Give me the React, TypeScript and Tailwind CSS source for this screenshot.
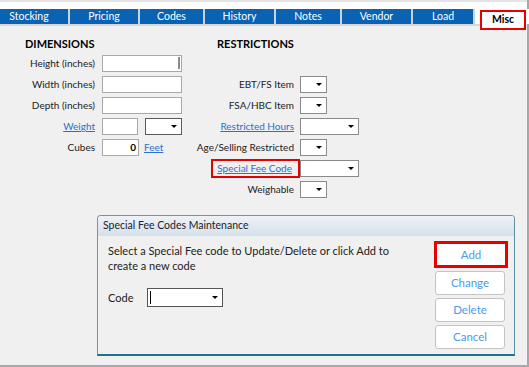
import React from "react";

const tabs = [
  { label: "Stocking", w: "w-[70px] pr-[10px]" },
  { label: "Pricing", w: "w-[70px]" },
  { label: "Codes", w: "w-[65px]" },
  { label: "History", w: "w-[71px]" },
  { label: "Notes", w: "w-[66px]" },
  { label: "Vendor", w: "w-[71px]" },
  { label: "Load", w: "w-[62px] border-r-0" },
];

const Arrow = () => (
  <span className="ml-auto mr-[4px] w-0 h-0 border-l-[3px] border-r-[3px] border-t-[3px] border-l-transparent border-r-transparent border-t-black" />
);

const Combo = ({ w, dark }: { w: string; dark?: boolean }) => (
  <div
    className={`${w} h-[17px] bg-white border flex items-center ${dark ? "border-[#5a5a5a]" : "border-[#8a8a8a]"}`}
  >
    <Arrow />
  </div>
);

const TextBox = ({ w, children }: { w: string; children?: React.ReactNode }) => (
  <div className={`${w} h-[17px] bg-white border border-[#a8a8a8] flex items-center justify-end pr-[2px]`}>
    {children}
  </div>
);

const Link = ({ children }: { children: React.ReactNode }) => (
  <span className="text-[#2a6fd0] underline">{children}</span>
);

const Btn = ({ label, red }: { label: string; red?: boolean }) => (
  <div
    className={`h-[24px] bg-white flex items-center justify-center text-[#4c9aec] text-[11.5px] ${
      red ? "border-[3px] border-[#e60000] h-[27px] w-[74px]" : "border border-[#c4c4c4] rounded-[3px] w-[70px] ml-[1px]"
    }`}
  >
    {label}
  </div>
);

export default function App() {
  return (
    <div
      className="w-[529px] h-[367px] bg-[#f0f0f0] relative overflow-hidden text-[#222]"
      style={{ fontFamily: "Lato, 'Open Sans', sans-serif" }}
    >
      <div className="absolute inset-0 border-r-2 border-b-2 border-[#a8a8a8] pointer-events-none" />
      <div className="h-[2px] bg-[#e4e4e4]" />
      <div className="h-[7px] bg-white" />
      <div className="flex h-[15px] bg-white relative">
        {tabs.map((t) => (
          <div
            key={t.label}
            className={`${t.w} h-full bg-[#0a62b2] border-r-2 border-[#c9d3de] text-white text-[10.5px] flex items-center justify-center`}
          >
            {t.label}
          </div>
        ))}
        <div className="ml-[5px] w-[46px] h-[20px] mt-[1px] bg-white border-2 border-[#e60000] text-black font-bold text-[10.5px] flex items-center justify-center">
          Misc
        </div>
      </div>
      <div className="h-[2px] bg-[#d6d6d6] mr-[30px]" />

      <div className="flex pt-[11px] text-[10px] whitespace-nowrap">
        <div className="w-[190px]">
          <div className="pl-[25px] h-[14px] font-bold text-[11px] text-black leading-[14px]">DIMENSIONS</div>
          <div className="mt-[4px] flex flex-col gap-[4px]">
            {["Height (inches)", "Width (inches)", "Depth (inches)"].map((l, i) => (
              <div key={l} className="flex items-center gap-[7px] h-[17px]">
                <span className="w-[95px] text-right">{l}</span>
                <div className="w-[80px] h-[17px] bg-white border border-[#a8a8a8] relative">
                  {i === 0 && <div className="absolute right-[1px] top-[1px] w-[2px] h-[12px] bg-[#8a8a8a]" />}
                </div>
              </div>
            ))}
            <div className="flex items-center gap-[7px] h-[17px]">
              <span className="w-[95px] text-right">
                <Link>Weight</Link>
              </span>
              <TextBox w="w-[36px]" />
              <Combo w="w-[37px]" dark />
            </div>
            <div className="flex items-center gap-[7px] h-[17px]">
              <span className="w-[95px] text-right">Cubes</span>
              <TextBox w="w-[37px]">
                <span className="font-bold text-black">0</span>
              </TextBox>
              <span className="-ml-[2px]">
                <Link>Feet</Link>
              </span>
            </div>
          </div>
        </div>

        <div className="w-[200px]">
          <div className="pl-[27px] h-[14px] font-bold text-[11px] text-black leading-[14px]">RESTRICTIONS</div>
          <div className="mt-[25px] flex flex-col gap-[4px]">
            {[
              { l: "EBT/FS Item", w: "w-[27px]" },
              { l: "FSA/HBC Item", w: "w-[27px]" },
              { l: "Restricted Hours", w: "w-[59px]", link: true },
              { l: "Age/Selling Restricted", w: "w-[27px]" },
              { l: "Special Fee Code", w: "w-[59px]", link: true, red: true },
              { l: "Weighable", w: "w-[27px]" },
            ].map((r) => (
              <div key={r.l} className="flex items-center h-[17px]">
                <div className="w-[110px] flex justify-end">
                  {r.red ? (
                    <span className="border-2 border-[#e60000] h-[19px] pl-[4px] pr-[6px] flex items-center">
                      <Link>{r.l}</Link>
                    </span>
                  ) : (
                    <span className="pr-[6px]">{r.link ? <Link>{r.l}</Link> : r.l}</span>
                  )}
                </div>
                <Combo w={r.w} />
              </div>
            ))}
          </div>
        </div>
      </div>

      <div className="absolute left-[97px] top-[215px] w-[418px] h-[141px] bg-[#f0f0f0] border border-[#8c8c8c] border-r-[#5b8fa6] border-b-2 border-b-[#1c7390] rounded-t-[4px] flex flex-col">
        <div className="h-[20px] bg-gradient-to-b from-[#eef2f7] to-[#d5e0ec] rounded-t-[3px] flex items-center pl-[5px] text-[10.5px] text-[#222]">
          Special Fee Codes Maintenance
        </div>
        <div className="flex flex-1">
          <div className="flex-1 pl-[10px] pt-[7px] text-[11px] leading-[15px] text-[#222]">
            <p>Select a Special Fee code to Update/Delete or click Add to</p>
            <p>create a new code</p>
            <div className="flex items-center mt-[15px]">
              <span className="w-[39px]">Code</span>
              <div className="w-[76px] h-[19px] bg-white border border-[#555] flex items-center relative">
                <div className="ml-[2px] w-[1px] h-[13px] bg-black" />
                <Arrow />
              </div>
            </div>
          </div>
          <div className="w-[80px] pt-[5px] flex flex-col gap-[3px]">
            <Btn label="Add" red />
            <Btn label="Change" />
            <Btn label="Delete" />
            <Btn label="Cancel" />
          </div>
        </div>
      </div>
    </div>
  );
}
